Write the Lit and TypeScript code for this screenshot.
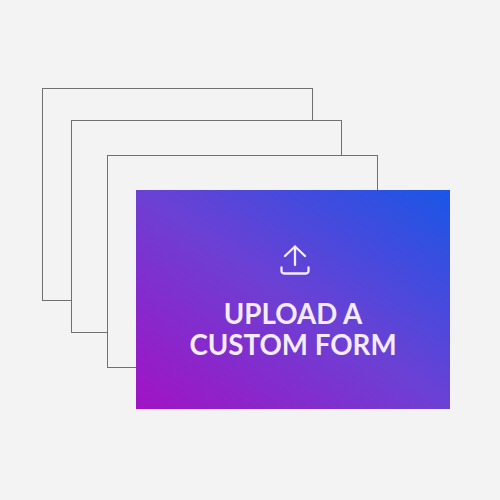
import { LitElement, html, css } from "lit";
import { customElement } from "lit/decorators.js";

@customElement("app-root")
export class AppRoot extends LitElement {
  static styles = css`
    :host {
      display: block;
      width: 500px;
      height: 500px;
      background: #f3f3f3;
    }
    .stage {
      position: relative;
      width: 500px;
      height: 500px;
      overflow: hidden;
    }
    .frame {
      position: absolute;
      box-sizing: border-box;
      border: 1px solid #707070;
      background: #f3f3f3;
      width: 271px;
      height: 213px;
    }
    .f1 { left: 42px; top: 88px; }
    .f2 { left: 71px; top: 120px; }
    .f3 { left: 107px; top: 155px; }
    .card {
      position: absolute;
      left: 136px;
      top: 190px;
      width: 314px;
      height: 219px;
      background: linear-gradient(to top right, #a113c4 0%, #6c40d4 50%, #1a56e6 100%);
      display: flex;
      flex-direction: column;
      align-items: center;
      padding-top: 55px;
      box-sizing: border-box;
      color: #f4ecfa;
    }
    svg {
      display: block;
      width: 30px;
      height: 30px;
      margin-left: 4px;
    }
    .title {
      margin-top: 23px;
      font-family: "Lato", sans-serif;
      font-weight: 700;
      font-size: 27.7px;
      line-height: 31px;
      text-align: center;
      white-space: nowrap;
    }
  `;

  render() {
    return html`
      <div class="stage">
        <div class="frame f1"></div>
        <div class="frame f2"></div>
        <div class="frame f3"></div>
        <div class="card">
          <svg viewBox="0 0 30 30" fill="none" stroke="currentColor" stroke-width="2.3" stroke-linecap="round" stroke-linejoin="round">
            <path d="M15 20V1.5M5 11L15 1.5L25 11" />
            <path d="M1.5 22.5V26a2.5 2.5 0 0 0 2.5 2.5H26a2.5 2.5 0 0 0 2.5-2.5V22.5" />
          </svg>
          <div class="title">UPLOAD A<br />CUSTOM FORM</div>
        </div>
      </div>
    `;
  }
}
